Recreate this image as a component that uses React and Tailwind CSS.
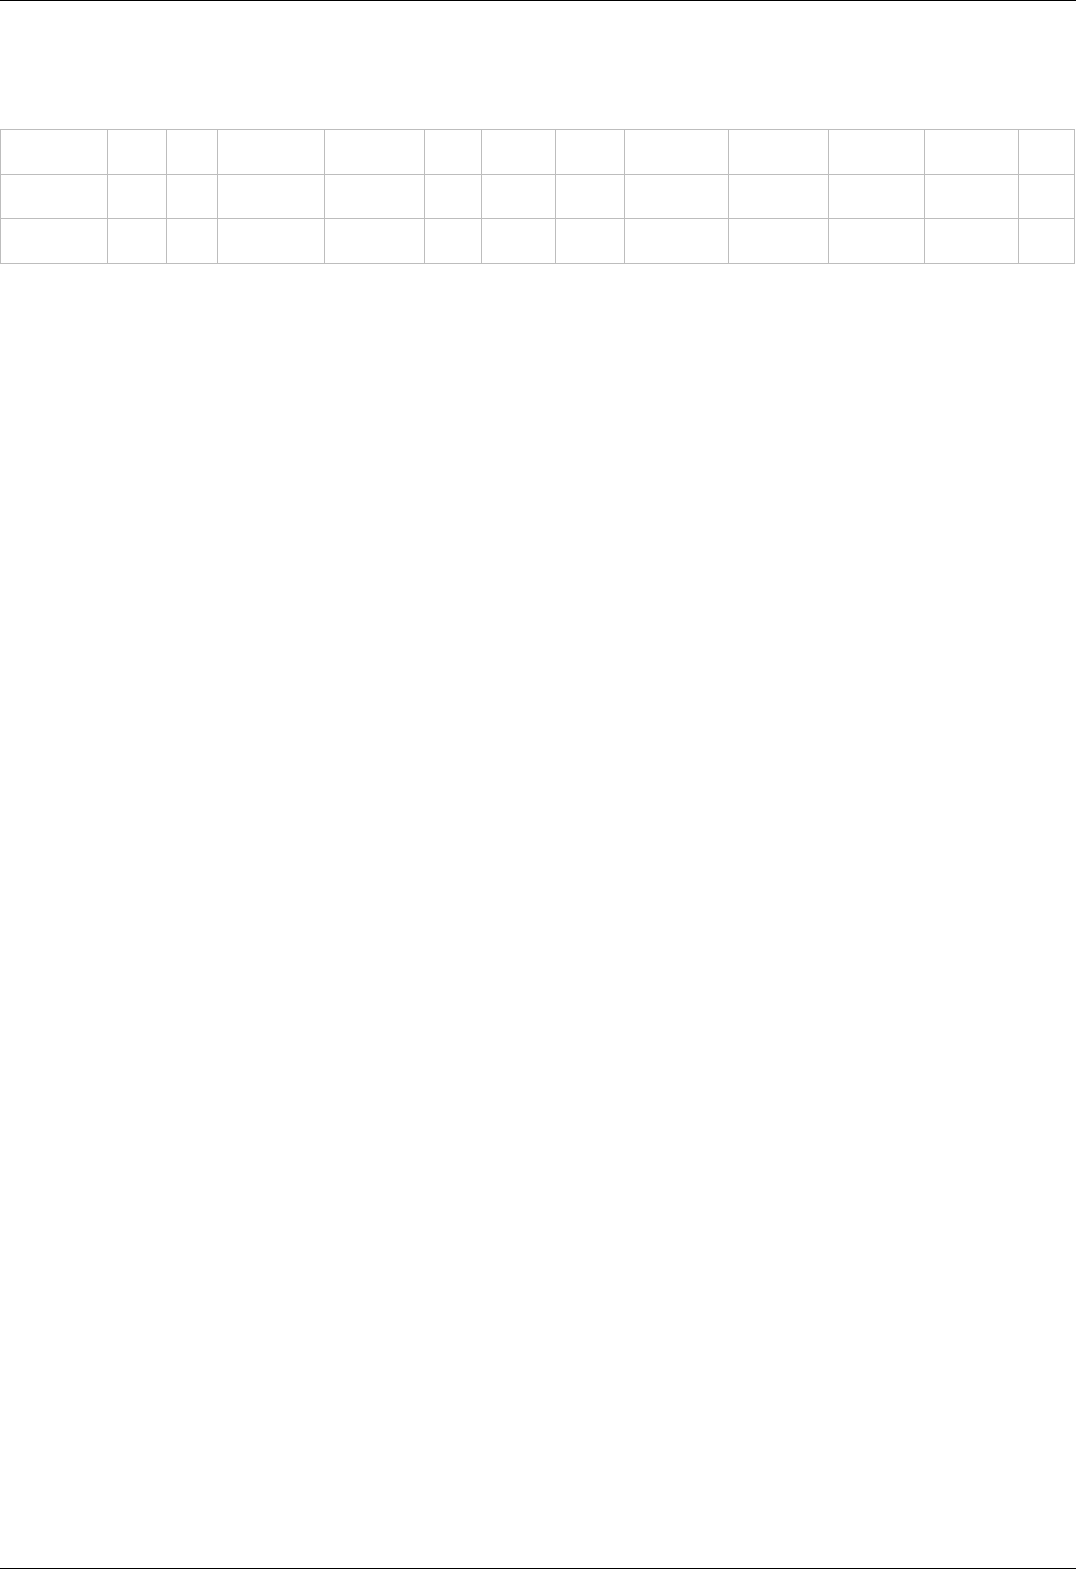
// column widths measured off the grid lines, written out so tailwind picks them up
const cols = [
  'w-[107px]',
  'w-[59px]',
  'w-[51px]',
  'w-[107px]',
  'w-[100px]',
  'w-[57px]',
  'w-[74px]',
  'w-[69px]',
  'w-[104px]',
  'w-[100px]',
  'w-[96px]',
  'w-[94px]',
  'w-[56px]',
]
const rows = ['h-[45px]', 'h-[44px]', 'h-[45px]']

const App = () => {
  return (
    <div className="h-[1569px] bg-white border-t border-b border-black font-['Liberation_Sans',sans-serif]">
      <div className="pt-[128px]">
        <table className="w-[1075px] table-fixed border-collapse">
          <colgroup>
            {cols.map((w, i) => (
              <col key={i} className={w} />
            ))}
          </colgroup>
          <tbody>
            {rows.map((h, r) => (
              <tr key={r} className={h}>
                {cols.map((_, c) => (
                  <td key={c} className="border border-[#bdbdbd] p-0"></td>
                ))}
              </tr>
            ))}
          </tbody>
        </table>
      </div>
    </div>
  )
}

export default App
